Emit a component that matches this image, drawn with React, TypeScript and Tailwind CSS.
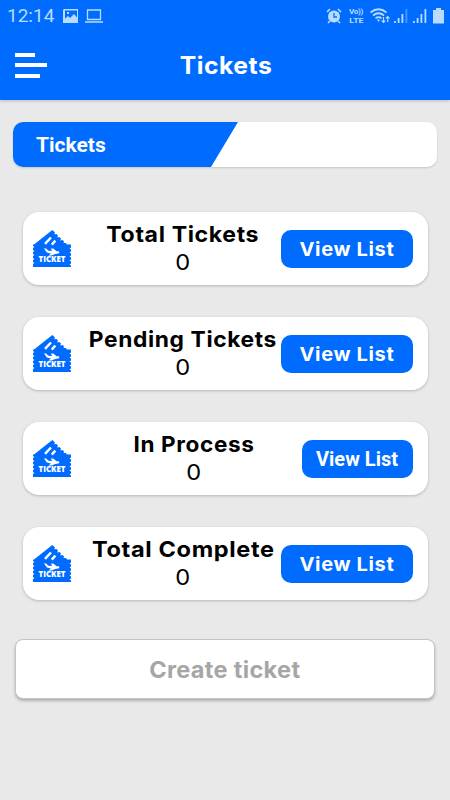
import type { ReactNode } from 'react'

const gotham = "font-['Inter',sans-serif]"
const roboto = "font-['Roboto',sans-serif]"

type Stat = { label: string; count: number; compact?: boolean; stretch: string }

const stats: Stat[] = [
  { label: 'Total Tickets', count: 0, stretch: 'scale-x-[1.05]' },
  { label: 'Pending Tickets', count: 0, stretch: 'scale-x-[1.035]' },
  { label: 'In Process', count: 0, compact: true, stretch: 'scale-x-[1.025]' },
  { label: 'Total Complete', count: 0, stretch: 'scale-x-[1.07]' },
]

function TicketIcon() {
  return (
    <svg viewBox="0 0 38 38" className="h-[38px] w-[38px] shrink-0">
      <path
        fill="#006cff"
        d="M1 14.500L19.300 0l2.700 2.500-.8 1.800 2.200-.4 1.600 1.500-.8 2 2.200-.5 1.600 1.500-.7 2 2.200-.4 1.700 1.600-.8 1.500 2.300-.2 1.500 1.600H38v3l-1.500 1 1.500 1v2l-1.500 1 1.500 1v2l-1.500 1 1.500 1v2l-1.500 1 1.500 1v2l-1.500 1 1.500 1V37H0v-3l1.500-1L0 32v-2l1.500-1L0 28v-2l1.500-1L0 24v-2l1.500-1L0 20v-2l1.500-1L0 16v-1.500z"
      />
      <path stroke="#fff" strokeWidth="2.400" d="M12 13.800l6-6.300M18.800 14.600l3.500-4" />
      <path fill="#fff" d="M11 18.300l2 .3 2.500 2.200 3.500.2-1-2.600h2.300l3.300 2.800h1.800c1.300.3 1.300 1.900 0 2.200l-3.200.6-3.500 1.600h-3.200l2.400-2.200-4.100-.8z" />
      <text x="19" y="32.300" fill="#fff" fontFamily="Open Sans" fontWeight="800" fontSize="8" textAnchor="middle" textLength="27" lengthAdjust="spacingAndGlyphs">
        TICKET
      </text>
    </svg>
  )
}

function Signal({ faded }: { faded?: boolean }) {
  return (
    <svg viewBox="0 0 14 16" className="h-4 w-[14px]" fill="#b7dcff">
      <path d="M0 13h1.800v2H0zM3.700 10h1.800v5H3.700zM7.500 6h1.800v9H7.500z" />
      <path d="M11.500 1h1.800v14h-1.800z" opacity={faded ? 0.4 : 1} />
    </svg>
  )
}

function StatusBar() {
  return (
    <div className="flex h-[31px] items-center pl-[7px] pr-[6px] text-[#b7dcff]">
      <span className={`${roboto} w-[47px] text-[19px] leading-none`}>12:14</span>
      <svg viewBox="0 0 16 14" className="ml-[9px] h-[14px] w-4" fill="currentColor">
        <path fillRule="evenodd" d="M1 0h14v14H0V1zm1 1.500v8l3-2.500 2 2 4-4 3 3.500v-7zM4 3h2v2H4z" />
      </svg>
      <svg viewBox="0 0 18 14" className="ml-[6px] h-[14px] w-[18px]" fill="none" stroke="currentColor" strokeWidth="1.300">
        <path d="M2.500 1h13v9.500h-13zM0 13h18" />
      </svg>
      <div className="ml-auto flex items-center">
        <svg viewBox="0 0 16 16" className="h-4 w-4" fill="none" stroke="currentColor">
          <circle cx="8" cy="8.500" r="6" fill="currentColor" stroke="none" />
          <path strokeWidth="1.600" d="M1 4l3-3M15 4l-3-3M4 13l-2 2M12 13l2 2" />
          <path stroke="#006cff" strokeWidth="1.300" d="M8 5v4h3" />
        </svg>
        <div className={`${roboto} ml-[6px] flex w-[16px] flex-col items-center text-[8px] font-bold leading-[9px]`}>
          <span className="tracking-[-0.3px]">Vo))</span>
          <span className="scale-x-110">LTE</span>
        </div>
        <svg viewBox="0 0 20 16" className="ml-[6px] h-4 w-5" fill="none" stroke="currentColor" strokeWidth="1.700">
          <path d="M.500 4.500q8-6.500 16 0M3 7.500q5.500-4.500 11 0M5.500 10.300q3-2.500 6 0" />
          <path fill="currentColor" stroke="none" d="M7 11.500h3L8.500 14z" />
          <path strokeWidth="1.200" d="M13.500 9v5.500m-1.800-1.800l1.800 1.800 1.800-1.800M17.700 14V8.500m-1.800 1.800l1.800-1.800 1.800 1.800" />
        </svg>
        <div className="ml-[4px] flex gap-[5px]">
          <Signal faded />
          <Signal />
        </div>
        <svg viewBox="0 0 11 16" className="ml-[6px] h-4 w-[11px]" fill="currentColor">
          <path d="M3 0h5v2h3v13.500H0V2h3z" />
        </svg>
      </div>
    </div>
  )
}

function Card({ children }: { children: ReactNode }) {
  return (
    <div className="flex h-[73px] items-center rounded-[16px] bg-white pl-[10.5px] pr-[15px] shadow-[0_1px_3px_rgba(0,0,0,0.22)]">
      {children}
    </div>
  )
}

export default function App() {
  return (
    <div className="flex h-[800px] w-[450px] flex-col overflow-hidden bg-[#e9e9e9]">
      <header className="h-[100px] shrink-0 bg-[#006cff] shadow-[0_1px_3px_rgba(0,0,0,0.2)]">
        <StatusBar />
        <div className="grid h-[69px] grid-cols-[1fr_auto_1fr] items-center px-[15px]">
          <button className="flex flex-col gap-[6.5px] pb-px" aria-label="Menu">
            <span className="h-1 w-5 bg-white" />
            <span className="h-1 w-8 bg-white" />
            <span className="h-1 w-[25px] bg-white" />
          </button>
          <h1 className={`${gotham} scale-x-[1.03] pl-px pt-px text-[24px] font-bold tracking-[0.5px] text-white`}>Tickets</h1>
        </div>
      </header>

      <main>
        {/* Section tab */}
        <div className="mx-[13px] mt-[22px] h-[45px] overflow-hidden rounded-[10px] bg-white shadow-[0_1px_2px_rgba(0,0,0,0.15)]">
          <div className="flex h-full w-[225px] items-center bg-[#006cff] pl-[23px] pt-[3px] [clip-path:polygon(0_0,100%_0,198px_100%,0_100%)]">
            <span className={`${roboto} text-[21px] font-bold text-white`}>Tickets</span>
          </div>
        </div>

        {/* Ticket counters */}
        <div className="mt-[45px] flex flex-col gap-8 px-[22.5px]">
          {stats.map((s) => (
            <Card key={s.label}>
              <TicketIcon />
              <div className={`${gotham} flex min-w-0 flex-1 flex-col items-center pb-[2px] pl-[15px] text-center text-black`}>
                <div className={`whitespace-nowrap text-[22px] font-bold leading-7 tracking-[0.6px] ${s.stretch}`}>{s.label}</div>
                <div className="scale-x-110 text-[21.5px] leading-7">{s.count}</div>
              </div>
              {s.compact ? (
                <button className={`${roboto} h-[38px] w-[111px] shrink-0 rounded-[10px] bg-[#006cff] text-[20px] font-bold text-white`}>
                  View List
                </button>
              ) : (
                <button className={`${gotham} h-[38px] w-[132px] shrink-0 rounded-[10px] bg-[#006cff] pt-[3px] text-[19px] font-bold tracking-[0.6px] text-white`}>
                  <span className="inline-block scale-x-[1.055]">View List</span>
                </button>
              )}
            </Card>
          ))}
        </div>

        <button
          className={`${gotham} mx-[15px] mt-[39px] flex h-[60px] w-[420px] items-center justify-center rounded-[8px] border border-[#c4c4c4] bg-white pt-[2px] text-[23px] font-bold tracking-[0.3px] text-[#a6a6a6] shadow-[0_2px_3px_rgba(0,0,0,0.25)]`}
        >
          <span className="scale-x-[1.025]">Create ticket</span>
        </button>
      </main>
    </div>
  )
}
